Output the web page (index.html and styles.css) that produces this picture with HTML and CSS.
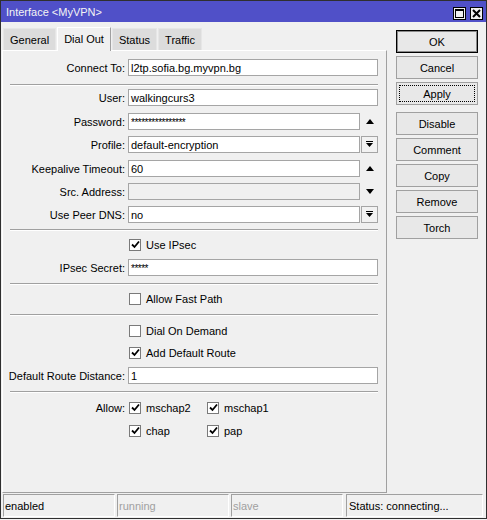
FILE: index.html
```html
<!DOCTYPE html>
<html>
<head>
<meta charset="utf-8">
<link rel="stylesheet" href="styles.css">
</head>
<body>
<div class="window">
  <div class="titlebar">
    <span class="title">Interface &lt;MyVPN&gt;</span>
    <div class="tb-buttons">
      <span class="tb-btn"><svg width="11" height="11" viewBox="0 0 11 11"><rect x="1.5" y="1.5" width="8" height="8" fill="none" stroke="#000" stroke-width="1"/><rect x="1" y="1" width="9" height="2" fill="#000"/></svg></span>
      <span class="tb-btn"><svg width="11" height="11" viewBox="0 0 11 11"><path d="M2 2 L9 9 M9 2 L2 9" stroke="#000" stroke-width="2"/></svg></span>
    </div>
  </div>
  <div class="main">
    <div class="left">
      <div class="tabs">
        <span class="tab">General</span>
        <span class="tab active">Dial Out</span>
        <span class="tab">Status</span>
        <span class="tab">Traffic</span>
      </div>
      <div class="panel">
        <div class="row mt8"><span class="lbl">Connect To:</span><div class="field"><span class="input">l2tp.sofia.bg.myvpn.bg</span></div></div>
        <div class="sep mt8"></div>
        <div class="row mt3"><span class="lbl">User:</span><div class="field"><span class="input">walkingcurs3</span></div></div>
        <div class="row mt7"><span class="lbl">Password:</span><div class="field"><span class="input pw">****************</span><span class="spin"><svg width="8" height="5" viewBox="0 0 8 5"><polygon points="0,5 8,5 4,0" fill="#000"/></svg></span></div></div>
        <div class="row"><span class="lbl">Profile:</span><div class="field"><span class="input">default-encryption</span><span class="dd"><svg width="7" height="7" viewBox="0 0 7 7"><rect x="0" y="0" width="7" height="1" fill="#000"/><polygon points="0,2 7,2 3.5,6" fill="#000"/></svg></span></div></div>
        <div class="row mt7"><span class="lbl">Keepalive Timeout:</span><div class="field"><span class="input">60</span><span class="spin"><svg width="8" height="5" viewBox="0 0 8 5"><polygon points="0,5 8,5 4,0" fill="#000"/></svg></span></div></div>
        <div class="row"><span class="lbl">Src. Address:</span><div class="field"><span class="input disabled"></span><span class="spin"><svg width="8" height="5" viewBox="0 0 8 5"><polygon points="0,0 8,0 4,5" fill="#000"/></svg></span></div></div>
        <div class="row"><span class="lbl">Use Peer DNS:</span><div class="field"><span class="input">no</span><span class="dd"><svg width="7" height="7" viewBox="0 0 7 7"><rect x="0" y="0" width="7" height="1" fill="#000"/><polygon points="0,2 7,2 3.5,6" fill="#000"/></svg></span></div></div>
        <div class="sep"></div>
        <div class="row mt5"><span class="lbl"></span><div class="field"><label class="cb"><span class="box"><svg width="9" height="9" viewBox="0 0 9 9"><path d="M1 4.5 L3.5 7 L8 1.5" fill="none" stroke="#000" stroke-width="1.8"/></svg></span>Use IPsec</label></div></div>
        <div class="row"><span class="lbl">IPsec Secret:</span><div class="field"><span class="input pw">*****</span></div></div>
        <div class="sep mt7"></div>
        <div class="row mt5"><span class="lbl"></span><div class="field"><label class="cb"><span class="box"></span>Allow Fast Path</label></div></div>
        <div class="sep mt7"></div>
        <div class="row"><span class="lbl"></span><div class="field"><label class="cb"><span class="box"></span>Dial On Demand</label></div></div>
        <div class="row mt5"><span class="lbl"></span><div class="field"><label class="cb"><span class="box"><svg width="9" height="9" viewBox="0 0 9 9"><path d="M1 4.5 L3.5 7 L8 1.5" fill="none" stroke="#000" stroke-width="1.8"/></svg></span>Add Default Route</label></div></div>
        <div class="row"><span class="lbl">Default Route Distance:</span><div class="field"><span class="input">1</span></div></div>
        <div class="sep mt7"></div>
        <div class="row"><span class="lbl">Allow:</span><div class="field"><label class="cb item"><span class="box"><svg width="9" height="9" viewBox="0 0 9 9"><path d="M1 4.5 L3.5 7 L8 1.5" fill="none" stroke="#000" stroke-width="1.8"/></svg></span>mschap2</label><label class="cb item"><span class="box"><svg width="9" height="9" viewBox="0 0 9 9"><path d="M1 4.5 L3.5 7 L8 1.5" fill="none" stroke="#000" stroke-width="1.8"/></svg></span>mschap1</label></div></div>
        <div class="row"><span class="lbl"></span><div class="field"><label class="cb item"><span class="box"><svg width="9" height="9" viewBox="0 0 9 9"><path d="M1 4.5 L3.5 7 L8 1.5" fill="none" stroke="#000" stroke-width="1.8"/></svg></span>chap</label><label class="cb item"><span class="box"><svg width="9" height="9" viewBox="0 0 9 9"><path d="M1 4.5 L3.5 7 L8 1.5" fill="none" stroke="#000" stroke-width="1.8"/></svg></span>pap</label></div></div>
      </div>
    </div>
    <div class="right">
      <span class="btn default">OK</span>
      <span class="btn">Cancel</span>
      <span class="btn focus">Apply</span>
      <span class="btn group">Disable</span>
      <span class="btn">Comment</span>
      <span class="btn">Copy</span>
      <span class="btn">Remove</span>
      <span class="btn">Torch</span>
    </div>
  </div>
  <div class="statusbar">
    <span class="cell c1">enabled</span>
    <span class="cell c2 dim">running</span>
    <span class="cell c3 dim">slave</span>
    <span class="cell c4">Status: connecting...</span>
  </div>
</div>
</body>
</html>
```
FILE: styles.css
```css
* { box-sizing: border-box; }
html, body { margin: 0; padding: 0; background: #f0f0f0; }
body {
  font-family: "Liberation Sans", Arial, sans-serif;
  font-size: 11px;
  color: #000;
}
.window {
  width: 487px;
  height: 519px;
  border: 1px solid #2f2f2f;
  background: #f0f0f0;
  display: flex;
  flex-direction: column;
}
.titlebar {
  height: 21px;
  flex: none;
  background: #5050c8;
  color: #f4f4f4;
  display: flex;
  align-items: center;
  justify-content: space-between;
  padding: 0 3px 0 5px;
}
.tb-buttons { display: flex; gap: 4px; margin-top: 4px; }
.tb-btn {
  width: 13px;
  height: 13px;
  background: #f0f0f0;
  border: 1px solid #000;
  display: flex;
  align-items: center;
  justify-content: center;
}
.main { display: flex; height: 471px; flex: none; }
.left {
  width: 385px;
  margin-left: 1px;
  display: flex;
  flex-direction: column;
}
.tabs {
  height: 28px;
  flex: none;
  display: flex;
  align-items: flex-end;
  gap: 1px;
  padding-left: 1px;
}
.tab {
  height: 22px;
  padding: 0 6px;
  display: flex;
  align-items: center;
  background: #dcdcdc;
  border: 1px solid #e6e6e6;
  border-bottom: none;
}
.tab.active {
  height: 24px;
  background: #f0f0f0;
  border-color: #fff #a0a0a0 transparent #fff;
  margin-bottom: -1px;
  position: relative;
  padding-bottom: 2px;
}
.panel {
  flex: 1;
  border-top: 1px solid #fff;
  border-left: 1px solid #fff;
  border-right: 1px solid #a0a0a0;
  border-bottom: 1px solid #a0a0a0;
}
.row {
  display: grid;
  grid-template-columns: 122px 250px;
  column-gap: 3px;
  height: 17px;
  margin-top: 6px;
  align-items: center;
}
.mt3 { margin-top: 3px; }
.mt5 { margin-top: 5px; }
.mt7 { margin-top: 7px; }
.mt8 { margin-top: 8px; }
.lbl { text-align: right; white-space: nowrap; }
.field { display: flex; gap: 1px; height: 17px; align-items: center; }
.input {
  flex: 1;
  height: 17px;
  border: 1px solid #a5a5a5;
  background: #fff;
  padding: 0 2px;
  display: flex;
  align-items: center;
  white-space: nowrap;
}
.input.pw { font-size: 10px; letter-spacing: -0.5px; padding-top: 2px; }
.input.disabled { background: #f0f0f0; }
.spin {
  width: 17px;
  height: 17px;
  display: flex;
  align-items: center;
  justify-content: center;
}
.dd {
  width: 17px;
  height: 17px;
  border: 1px solid #a5a5a5;
  background: #f2f2f2;
  display: flex;
  align-items: center;
  justify-content: center;
}
.sep {
  height: 2px;
  margin: 6px 0 0 7px;
  width: 368px;
  border-top: 1px solid #a0a0a0;
  border-bottom: 1px solid #fff;
}
.sep.mt5 { margin-top: 5px; }
.sep.mt7 { margin-top: 7px; }
.sep.mt8 { margin-top: 8px; }
.cb {
  display: flex;
  align-items: center;
  gap: 5px;
  margin-left: 1px;
  white-space: nowrap;
}
.cb.item { width: 77px; }
.cb.item + .cb.item { margin-left: 0; }
.box {
  width: 12px;
  height: 12px;
  border: 1px solid #7a7a7a;
  background: #fff;
  display: flex;
  align-items: center;
  justify-content: center;
}
.right {
  width: 99px;
  padding: 8px 0 0 9px;
  display: flex;
  flex-direction: column;
  gap: 3px;
}
.btn {
  width: 82px;
  height: 23px;
  border: 1px solid #a0a0a0;
  background: #e8e8e8;
  display: flex;
  align-items: center;
  justify-content: center;
}
.btn.default { border-color: #000; box-shadow: inset 0 0 0 1px #8a8a8a; }
.btn.focus { outline: 1px dotted #000; outline-offset: -4px; }
.btn.group { margin-top: 4px; }
.statusbar {
  flex: 1;
  display: flex;
  gap: 2px;
  padding: 1px 0 0 2px;
}
.cell {
  height: 23px;
  border-top: 1px solid #a0a0a0;
  border-left: 1px solid #a0a0a0;
  border-right: 1px solid #fff;
  border-bottom: 1px solid #fff;
  padding-left: 1px;
  display: flex;
  align-items: center;
  white-space: nowrap;
}
.c1, .c2, .c3 { width: 112px; }
.c4 { width: 137px; margin-left: 1px; padding-left: 2px; }
.dim { color: #a0a0a0; }
```
